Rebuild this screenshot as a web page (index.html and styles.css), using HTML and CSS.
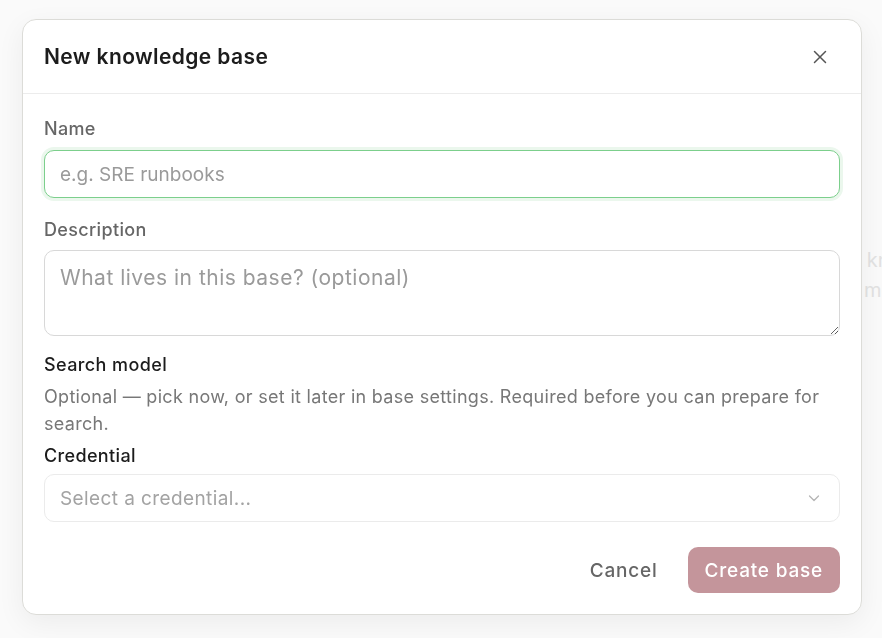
FILE: index.html
```html
<!DOCTYPE html>
<html lang="en">
<head>
  <meta charset="UTF-8" />
  <meta name="viewport" content="width=device-width, initial-scale=1.0"/>
  <title>Knowledge bases</title>
  <link rel="stylesheet" href="styles.css">
</head>
<body>

  <div class="page">
    <div class="page-text">
      <p class="indent">Use knowledge bases to group documents.</p>
      <p>Add more sources at any time.</p>
    </div>
  </div>

  <div class="overlay">
    <div class="modal">
      <div class="modal-header">
        <h2>New knowledge base</h2>
        <button class="close-btn" aria-label="Close">
          <svg width="14" height="14" viewBox="0 0 14 14" fill="none" stroke="#555" stroke-width="1.5" stroke-linecap="round">
            <path d="M1.5 1.5l11 11M12.5 1.5l-11 11"/>
          </svg>
        </button>
      </div>

      <form class="modal-body">
        <label for="name">Name</label>
        <input type="text" id="name" class="field focused" placeholder="e.g. SRE runbooks" autofocus />

        <label for="description" class="gap-top">Description</label>
        <textarea id="description" class="field" placeholder="What lives in this base? (optional)"></textarea>

        <div class="section-title">Search model</div>
        <p class="hint">Optional — pick now, or set it later in base settings. Required before you can prepare for search.</p>

        <label for="credential" class="strong">Credential</label>
        <div class="select" id="credential">
          <span>Select a credential...</span>
          <svg width="14" height="14" viewBox="0 0 14 14" fill="none" stroke="#b5b5b5" stroke-width="1.3" stroke-linecap="round" stroke-linejoin="round">
            <path d="M2.5 5l4.5 4.5L11.5 5"/>
          </svg>
        </div>

        <div class="actions">
          <button type="button" class="btn-cancel">Cancel</button>
          <button type="submit" class="btn-create" disabled>Create base</button>
        </div>
      </form>
    </div>
  </div>

</body>
</html>
```

FILE: styles.css
```css
* {
  box-sizing: border-box;
}

body {
  margin: 0;
  font-family: 'Inter', 'Open Sans', sans-serif;
  background: #fafafa;
  color: #1a1a1a;
  height: 100vh;
  overflow: hidden;
}

/* Page behind the dialog */
.page {
  height: 100%;
  padding: 245px 0 0 820px;
  overflow: hidden;
}

.page-text {
  white-space: nowrap;
  color: #e2e2e2;
  font-size: 20px;
}

.page-text p {
  margin: 0;
  line-height: 30px;
}

.page-text .indent {
  padding-left: 4px;
}

.overlay {
  position: fixed;
  inset: 0;
  padding: 19px 21px 24px 22px;
}

.modal {
  background: #fff;
  border: 1px solid #dcdcd8;
  border-radius: 14px;
  box-shadow: 0 8px 28px rgba(0, 0, 0, 0.06);
  width: 840px;
  height: 596px;
}

.modal-header {
  display: flex;
  align-items: center;
  justify-content: space-between;
  height: 74px;
  padding: 0 34px 0 21px;
  border-bottom: 1px solid #ececec;
}

.modal-header h2 {
  margin: 0;
  font-size: 21px;
  font-weight: 600;
  color: #1c1c1c;
  letter-spacing: 0.4px;
}

.close-btn {
  background: none;
  border: none;
  padding: 0;
  width: 14px;
  height: 14px;
  cursor: pointer;
  display: flex;
}

.modal-body {
  padding: 24px 21px 0;
  display: flex;
  flex-direction: column;
}

label {
  font-size: 18px;
  line-height: 22px;
  font-weight: 500;
  color: #666;
  letter-spacing: 0.35px;
  margin-bottom: 10px;
}

label.gap-top {
  margin-top: 21px;
  margin-bottom: 9px;
}

label.strong {
  color: #1c1c1c;
  margin-top: 8px;
  margin-bottom: 7px;
}

.field {
  width: 100%;
  font-family: inherit;
  font-size: 19px;
  color: #222;
  border: 1px solid #d8d8d8;
  border-radius: 10px;
  padding: 0 15px;
  outline: none;
  background: #fff;
}

.field::placeholder {
  color: #9a9a9a;
}

input.field {
  height: 48px;
}

.field.focused {
  border-color: #7ccf8c;
  box-shadow: 0 0 0 3px #ebf7ed;
}

textarea.field {
  height: 86px;
  padding-top: 14px;
  font-size: 21px;
  letter-spacing: 0.5px;
  resize: vertical;
}

.section-title {
  font-size: 18px;
  line-height: 22px;
  font-weight: 500;
  color: #1c1c1c;
  letter-spacing: 0.4px;
  margin-top: 18px;
}

.hint {
  margin: 7px 0 0;
  font-size: 18px;
  line-height: 27px;
  letter-spacing: 0.3px;
  color: #777;
}

.select {
  height: 48px;
  border: 1px solid #ebebeb;
  border-radius: 10px;
  padding: 0 18px 0 15px;
  display: flex;
  align-items: center;
  justify-content: space-between;
  font-size: 19px;
  letter-spacing: 0.4px;
  color: #a3a3a3;
}

.actions {
  display: flex;
  justify-content: flex-end;
  align-items: center;
  gap: 30px;
  margin-top: 25px;
}

.btn-cancel {
  background: none;
  border: none;
  font-family: inherit;
  font-size: 19px;
  font-weight: 500;
  letter-spacing: 0.8px;
  color: #666;
  cursor: pointer;
  padding: 0;
}

.btn-create {
  background: #c4959b;
  color: #fff;
  border: none;
  border-radius: 10px;
  font-family: inherit;
  font-size: 19px;
  font-weight: 500;
  letter-spacing: 0.8px;
  height: 46px;
  padding: 0 17px;
}
```
